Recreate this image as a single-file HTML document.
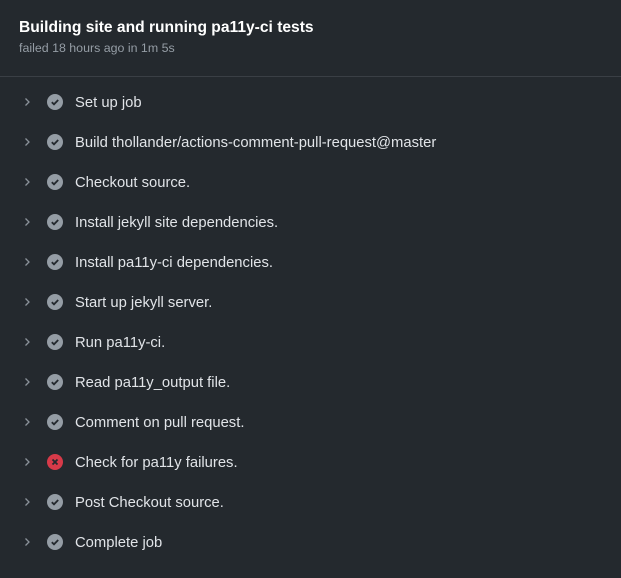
<!DOCTYPE html>
<html><head><style>
body{margin:0;background:#24292e;width:621px;height:578px;overflow:hidden;font-family:"Liberation Sans",sans-serif;}
.h{position:absolute;left:19px;top:19px;color:#fff;font-weight:bold;font-size:15.6px;}
.s{position:absolute;left:19px;top:41px;color:#959da5;font-size:12.4px;}
.d{position:absolute;left:0;top:76px;width:621px;height:1px;background:#3a3f45;}
.r{position:absolute;left:0;height:20px;width:621px;}
.r svg{position:absolute;top:0;}
.r span{position:absolute;left:75px;top:1px;line-height:20px;color:#e1e4e8;font-size:14.8px;}
</style></head><body>
<div class="h">Building site and running pa11y-ci tests</div>
<div class="s">failed 18 hours ago in 1m 5s</div>
<div class="d"></div>
<div id="rows"></div>
<script>
var t=["Set up job","Build thollander/actions-comment-pull-request@master","Checkout source.","Install jekyll site dependencies.","Install pa11y-ci dependencies.","Start up jekyll server.","Run pa11y-ci.","Read pa11y_output file.","Comment on pull request.","Check for pa11y failures.","Post Checkout source.","Complete job"];
var h="";
t.forEach(function(s,i){
var y=92+i*40;
var fail=i==9;
var icon=fail?'<circle cx="8" cy="8" r="8" fill="#d73a49"/><path d="M5.5 5.5L10.5 10.5M10.5 5.5L5.5 10.5" stroke="#24292e" stroke-width="1.8"/>':'<circle cx="8" cy="8" r="8" fill="#959da5"/><path d="M4.8 8.2L7 10.3L11.2 6" stroke="#24292e" stroke-width="1.8" fill="none"/>';
h+='<div class="r" style="top:'+y+'px"><svg style="left:22px" width="12" height="20" viewBox="0 0 12 20"><path d="M3.5 6.5L7 10L3.5 13.5" stroke="#8b929a" stroke-width="1.3" fill="none"/></svg><svg style="left:47px;top:2px" width="16" height="16" viewBox="0 0 16 16">'+icon+'</svg><span>'+s+'</span></div>';
});
document.getElementById("rows").innerHTML=h;
</script>
</body></html>
